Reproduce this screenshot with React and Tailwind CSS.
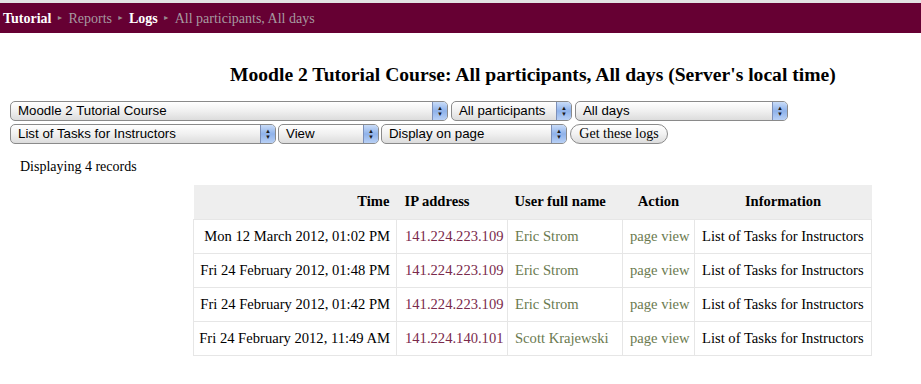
import React from 'react';

const rows = [
  { time: 'Mon 12 March 2012, 01:02 PM', ip: '141.224.223.109', user: 'Eric Strom' },
  { time: 'Fri 24 February 2012, 01:48 PM', ip: '141.224.223.109', user: 'Eric Strom' },
  { time: 'Fri 24 February 2012, 01:42 PM', ip: '141.224.223.109', user: 'Eric Strom' },
  { time: 'Fri 24 February 2012, 11:49 AM', ip: '141.224.140.101', user: 'Scott Krajewski' },
];

// fake mac-style select box
const Select = ({ label, width }) => (
  <div
    className="flex h-[20px] items-stretch rounded-[5px] border border-[#8a8a8a] bg-gradient-to-b from-[#ffffff] via-[#f0f0f0] to-[#dcdcdc] text-[13.3px] leading-[18px] text-black"
    style={{ width }}
  >
    <span className="flex-1 truncate pl-[7px]">{label}</span>
    <span className="flex w-[15px] flex-col items-center justify-center rounded-r-[4px] border-l border-[#7c8fb8] bg-gradient-to-b from-[#c9dcf8] via-[#8fb2ea] to-[#b8d0f5] text-[6px] leading-[6px] text-[#1a1a1a]">
      <span>▲</span>
      <span>▼</span>
    </span>
  </div>
);

const Sep = () => <span className="mx-[5px] text-[7px] text-[#9a8a90]">►</span>;

export default function App() {
  return (
    <div className="min-h-[384px] w-[921px] bg-white font-['Liberation_Serif',serif] text-black">
      <div className="h-[3px] bg-[#e3e3e3]" />
      <div className="flex h-[30px] items-center bg-[#660033] pl-[3px] text-[14px]">
        <span className="font-semibold text-white">Tutorial</span>
        <Sep />
        <span className="text-[#a79aa0]">Reports</span>
        <Sep />
        <span className="font-bold text-white">Logs</span>
        <Sep />
        <span className="text-[#a79aa0]">All participants, All days</span>
      </div>

      <h2 className="pl-[230px] pt-[31px] text-[19.6px] font-bold leading-[22px]">
        Moodle 2 Tutorial Course: All participants, All days (Server's local time)
      </h2>

      <div className="mt-[15px] flex flex-col gap-[3px] pl-[10px] font-['Liberation_Sans',sans-serif]">
        <div className="flex gap-[3px]">
          <Select label="Moodle 2 Tutorial Course" width={438} />
          <Select label="All participants" width={121} />
          <Select label="All days" width={213} />
        </div>
        <div className="flex gap-[2px]">
          <Select label="List of Tasks for Instructors" width={266} />
          <Select label="View" width={101} />
          <Select label="Display on page" width={186} />
          <button className="ml-[1px] h-[20px] w-[98px] rounded-[10px] border border-[#8a8a8a] bg-gradient-to-b from-[#ffffff] via-[#f2f2f2] to-[#dcdcdc] font-['Liberation_Serif',serif] text-[14px] leading-[18px]">
            Get these logs
          </button>
        </div>
      </div>

      <div className="pl-[20px] pt-[14px] text-[14px] leading-[18px]">Displaying 4 records</div>

      <table className="ml-[193px] mt-[9px] w-[679px] border-collapse text-[14.6px]">
        <thead>
          <tr className="h-[34px] bg-[#eeeeee] font-bold">
            <th className="w-[203px] pr-[7px] text-right">Time</th>
            <th className="w-[111px] pl-[8px] text-left">IP address</th>
            <th className="w-[115px] pl-[7px] text-left">User full name</th>
            <th className="w-[72px] text-center">Action</th>
            <th className="text-center">Information</th>
          </tr>
        </thead>
        <tbody>
          {rows.map((r, i) => (
            <tr key={i} className="h-[34px] whitespace-nowrap">
              <td className="border border-[#e6e6e6] pr-[6px] pt-[2px] text-right">{r.time}</td>
              <td className="border border-[#e6e6e6] pl-[8px] pt-[2px] text-[#7a2a4c]">{r.ip}</td>
              <td className="border border-[#e6e6e6] pl-[7px] pt-[2px] text-[#6b7a4f]">{r.user}</td>
              <td className="border border-[#e6e6e6] pl-[7px] pt-[2px] text-[#6b7a4f]">page view</td>
              <td className="border border-[#e6e6e6] pl-[7px] pt-[2px]">List of Tasks for Instructors</td>
            </tr>
          ))}
        </tbody>
      </table>
    </div>
  );
}
